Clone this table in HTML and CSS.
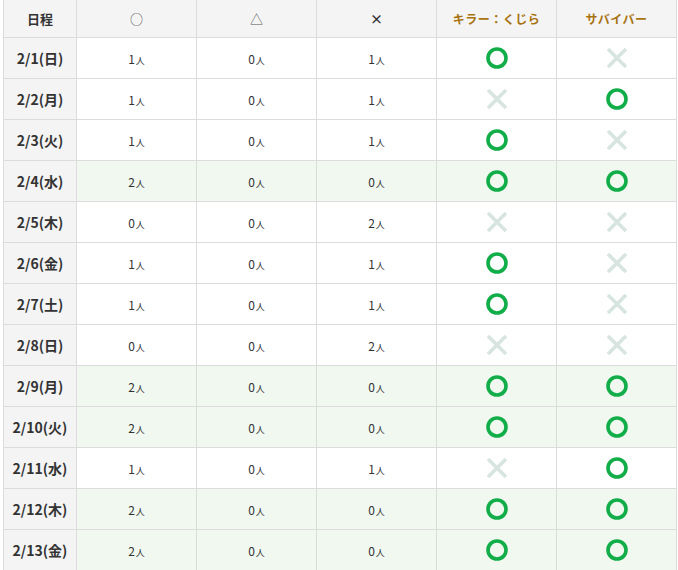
FILE: index.html
```html
<!DOCTYPE html>
<html lang="ja">
<head>
<meta charset="utf-8">
<link rel="stylesheet" href="styles.css">
</head>
<body>
<div class="wrap">
<table class="sched">
<colgroup><col class="c-date"><col class="c-n"><col class="c-n"><col class="c-n"><col class="c-n"><col class="c-n"></colgroup>
<thead>
<tr><th class="h-date">日程</th><th class="h-sym">○</th><th class="h-sym">△</th><th class="h-sym h-x">×</th><th class="h-role">キラー：くじら</th><th class="h-role">サバイバー</th></tr>
</thead>
<tbody id="body"></tbody>
</table>
</div>
<svg width="0" height="0" class="defs">
<symbol id="ok" viewBox="0 0 24 24"><circle cx="12" cy="12" r="9" fill="none" stroke="#10ad48" stroke-width="3.6"/></symbol>
<symbol id="ng" viewBox="0 0 24 24"><path d="M3 3L21 21M21 3L3 21" fill="none" stroke="#d7e4e0" stroke-width="3.6"/></symbol>
</svg>
<script>
const rows=[
["2/1(日)",1,0,1,1,0],
["2/2(月)",1,0,1,0,1],
["2/3(火)",1,0,1,1,0],
["2/4(水)",2,0,0,1,1],
["2/5(木)",0,0,2,0,0],
["2/6(金)",1,0,1,1,0],
["2/7(土)",1,0,1,1,0],
["2/8(日)",0,0,2,0,0],
["2/9(月)",2,0,0,1,1],
["2/10(火)",2,0,0,1,1],
["2/11(水)",1,0,1,0,1],
["2/12(木)",2,0,0,1,1],
["2/13(金)",2,0,0,1,1]
];
const b=document.getElementById('body');
const ic=v=>`<svg class="ic"><use href="#${v?'ok':'ng'}"/></svg>`;
b.innerHTML=rows.map(r=>`<tr class="${r[1]===2?'full':''}"><th class="date">${r[0]}</th><td>${r[1]}<small>人</small></td><td>${r[2]}<small>人</small></td><td>${r[3]}<small>人</small></td><td>${ic(r[4])}</td><td>${ic(r[5])}</td></tr>`).join('');
</script>
</body>
</html>
```
FILE: styles.css
```css
html,body{margin:0;padding:0;background:#fff;}
body{font-family:"Noto Sans CJK JP","Noto Sans",sans-serif;color:#333;}
.wrap{padding-left:3px;}
.defs{position:absolute;}
.sched{border-collapse:collapse;table-layout:fixed;width:674px;}
.c-date{width:73px;}
.c-n{width:120px;}
.sched th,.sched td{border:1px solid #dcdcdc;text-align:center;vertical-align:middle;padding:0;}
.sched thead th{border-top:none;height:37px;background:#f4f4f4;}
.h-date{font-size:13px;font-weight:700;color:#333;}
.h-sym{font-size:13px;font-weight:400;color:#555;}
.h-x{color:#333;font-weight:700;}
.h-role{font-size:12px;font-weight:700;color:#a8730f;letter-spacing:0.5px;}
.sched tbody tr{height:41px;}
.date{background:#f4f4f4;font-size:14px;font-weight:700;color:#333;}
.sched td{font-size:12px;color:#333;}
.sched td small{font-size:9px;margin-left:1px;}
.full td{background:#f0f8f0;}
.ic{width:24px;height:24px;display:block;margin:0 auto;}
```
